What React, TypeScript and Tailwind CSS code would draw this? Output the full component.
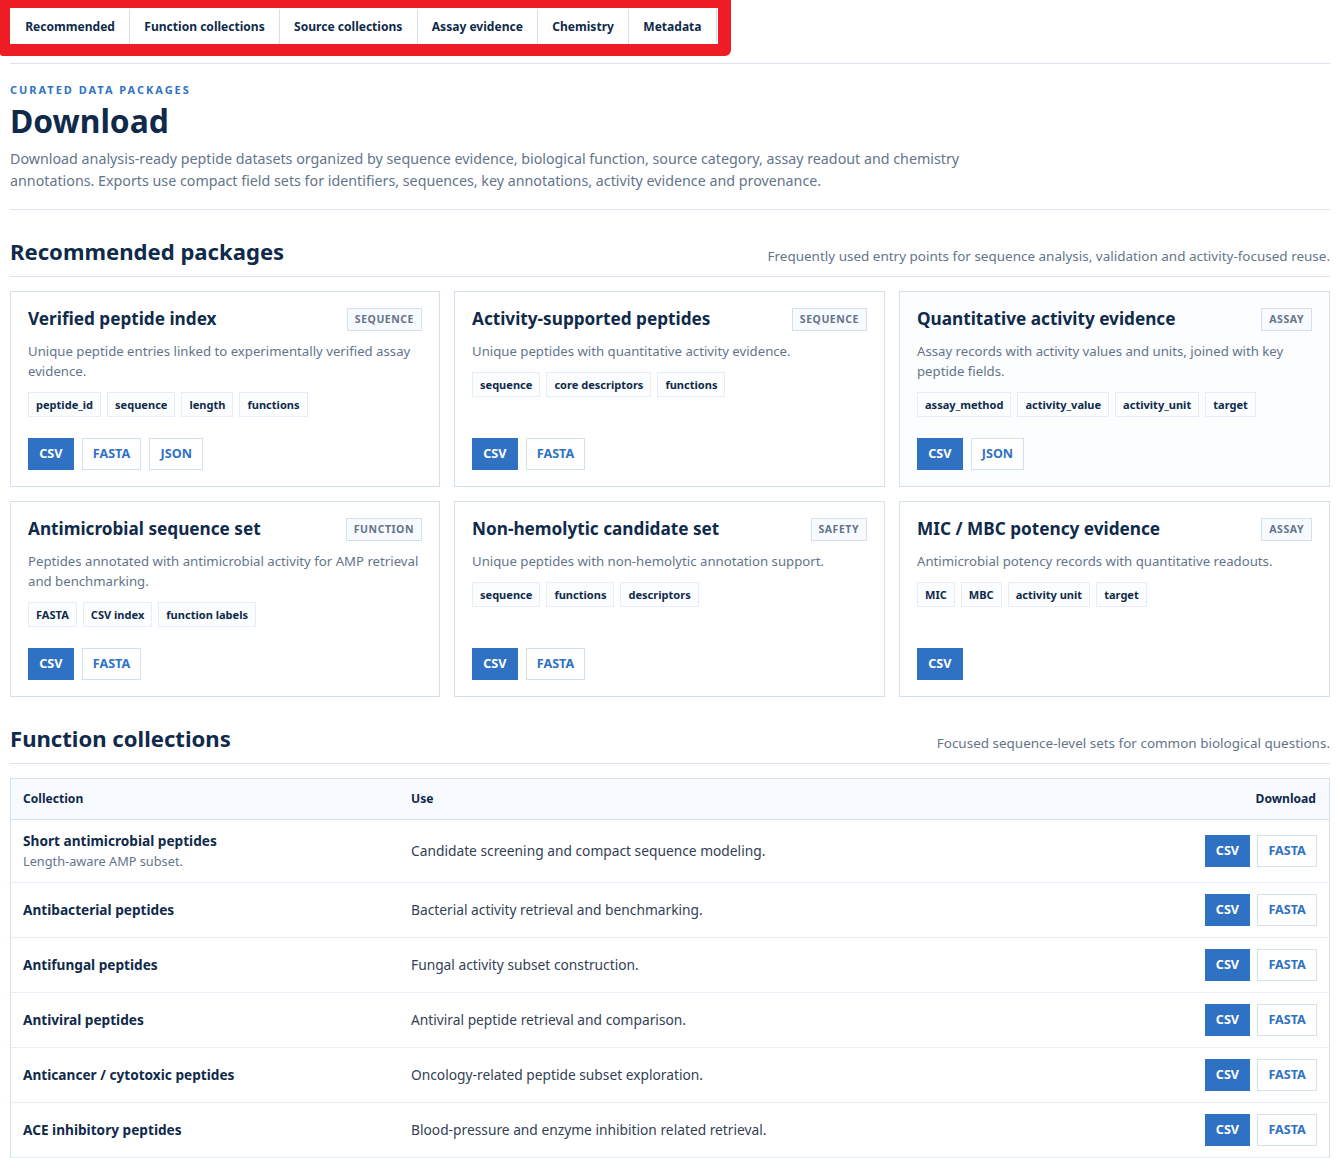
const tabs = ["Recommended", "Function collections", "Source collections", "Assay evidence", "Chemistry", "Metadata"];

type Card = { title: string; tag: string; desc: string; fields: string[]; btns: string[]; tint?: boolean };

const cards: Card[] = [
  { title: "Verified peptide index", tag: "SEQUENCE", desc: "Unique peptide entries linked to experimentally verified assay evidence.", fields: ["peptide_id", "sequence", "length", "functions"], btns: ["CSV", "FASTA", "JSON"] },
  { title: "Activity-supported peptides", tag: "SEQUENCE", desc: "Unique peptides with quantitative activity evidence.", fields: ["sequence", "core descriptors", "functions"], btns: ["CSV", "FASTA"] },
  { title: "Quantitative activity evidence", tag: "ASSAY", desc: "Assay records with activity values and units, joined with key peptide fields.", fields: ["assay_method", "activity_value", "activity_unit", "target"], btns: ["CSV", "JSON"], tint: true },
  { title: "Antimicrobial sequence set", tag: "FUNCTION", desc: "Peptides annotated with antimicrobial activity for AMP retrieval and benchmarking.", fields: ["FASTA", "CSV index", "function labels"], btns: ["CSV", "FASTA"] },
  { title: "Non-hemolytic candidate set", tag: "SAFETY", desc: "Unique peptides with non-hemolytic annotation support.", fields: ["sequence", "functions", "descriptors"], btns: ["CSV", "FASTA"] },
  { title: "MIC / MBC potency evidence", tag: "ASSAY", desc: "Antimicrobial potency records with quantitative readouts.", fields: ["MIC", "MBC", "activity unit", "target"], btns: ["CSV"] },
];

const rows = [
  { name: "Short antimicrobial peptides", sub: "Length-aware AMP subset.", use: "Candidate screening and compact sequence modeling." },
  { name: "Antibacterial peptides", use: "Bacterial activity retrieval and benchmarking." },
  { name: "Antifungal peptides", use: "Fungal activity subset construction." },
  { name: "Antiviral peptides", use: "Antiviral peptide retrieval and comparison." },
  { name: "Anticancer / cytotoxic peptides", use: "Oncology-related peptide subset exploration." },
  { name: "ACE inhibitory peptides", use: "Blood-pressure and enzyme inhibition related retrieval." },
];

function Btn({ label }: { label: string }) {
  const primary = label === "CSV";
  return (
    <a className={`flex h-8 items-center justify-center border px-[10.2px] text-[12.6px] font-bold ${primary ? "border-[#2f72c4] bg-[#2f72c4] text-white" : "border-[#d5e0ee] bg-white text-[#2f72c4]"}`}>
      {label}
    </a>
  );
}

function SectionHead({ title, note }: { title: string; note: string }) {
  return (
    <div className="flex items-end justify-between border-b border-[#dde5f0] pb-[9px]">
      <h2 className="text-[22.1px] leading-[32px] font-bold text-[#0f2a4a]">{title}</h2>
      <p className="pb-px text-[13.48px] leading-[20px] text-[#64748b]">{note}</p>
    </div>
  );
}

export default function App() {
  return (
    <div className="min-h-[1158px] overflow-hidden bg-white pr-2 pl-[10px] font-['Noto_Sans',sans-serif] text-[#0f2a4a]">
      <div className="border-b border-[#dde5f0] pb-[7px]">
        <div className="-ml-[10px] w-[731px] rounded-br-[6px] rounded-bl-[3px] border-t-[8px] border-r-[13px] border-b-[12px] border-l-[10px] border-[#ee1c25] bg-white">
          <div className="flex h-[36px] items-stretch pt-px pl-px">
            {tabs.map((t) => (
              <div key={t} className="flex items-center border-r border-[#d5e0ee] px-[14.2px] pt-px text-[12.05px] font-bold whitespace-nowrap text-[#0f2a4a]">{t}</div>
            ))}
          </div>
        </div>
      </div>

      <div className="border-b border-[#dde5f0] pt-[18px] pb-[17px]">
        <div className="text-[11px] leading-4 font-bold tracking-[0.18em] text-[#2f72c4]">CURATED DATA PACKAGES</div>
        <h1 className="mt-[2px] text-[31.8px] leading-[42px] font-bold text-[#0f2a4a]">Download</h1>
        <p className="mt-[6px] max-w-[980px] text-[14.28px] leading-[22px] text-[#64748b]">
          Download analysis-ready peptide datasets organized by sequence evidence, biological function, source category, assay readout and chemistry annotations. Exports use compact field sets for identifiers, sequences, key annotations, activity evidence and provenance.
        </p>
      </div>

      <section className="mt-[25px]">
        <SectionHead title="Recommended packages" note="Frequently used entry points for sequence analysis, validation and activity-focused reuse." />
        <div className="mt-[14px] grid grid-cols-[430px_431px_431px] gap-[14px]">
          {cards.map((c) => (
            <div key={c.title} className={`flex h-[196px] flex-col border border-[#d5e0ee] px-[17px] pt-[15px] pb-[16px] ${c.tint ? "bg-[#fbfdff]" : "bg-white"}`}>
              <div className="flex items-center justify-between">
                <h3 className="text-[17.2px] leading-[24px] font-bold text-[#0f2a4a]">{c.title}</h3>
                <span className="border border-[#d5e0ee] bg-[#f7faff] px-[7px] text-[10.5px] leading-[21px] font-bold tracking-[0.05em] text-[#64748b]">{c.tag}</span>
              </div>
              <p className="mt-[10px] text-[13.2px] leading-[20px] text-[#64748b]">{c.desc}</p>
              <div className="mt-[11px] flex gap-[6px]">
                {c.fields.map((f) => (
                  <span key={f} className="border border-[#e6edf6] bg-[#fbfdff] px-[7px] text-[11.05px] leading-[23px] font-bold text-[#0f2a4a]">{f}</span>
                ))}
              </div>
              <div className="mt-auto flex gap-2">
                {c.btns.map((b) => <Btn key={b} label={b} />)}
              </div>
            </div>
          ))}
        </div>
      </section>

      <section className="mt-[25px]">
        <SectionHead title="Function collections" note="Focused sequence-level sets for common biological questions." />
        <div className="mt-[14px] border border-[#d5e0ee]">
          <div className="grid h-[41px] grid-cols-[388px_1fr_auto] items-center border-b border-[#d5e0ee] bg-[#f7faff] px-3 text-[12.1px] font-bold text-[#0f2a4a]">
            <div>Collection</div><div>Use</div><div className="pr-px">Download</div>
          </div>
          {rows.map((r, i) => (
            <div key={r.name} className={`grid grid-cols-[388px_1fr_auto] items-center border-b border-[#e6edf6] px-3 ${i === 0 ? "h-[63px]" : "h-[55px]"}`}>
              <div>
                <div className="text-[13.65px] leading-[20px] font-bold text-[#0f2a4a]">{r.name}</div>
                {r.sub && <div className="text-[12.75px] leading-[20px] text-[#64748b]">{r.sub}</div>}
              </div>
              <div className="text-[13.77px] text-[#334155]">{r.use}</div>
              <div className="flex gap-[7px]"><Btn label="CSV" /><Btn label="FASTA" /></div>
            </div>
          ))}
        </div>
      </section>
    </div>
  );
}
